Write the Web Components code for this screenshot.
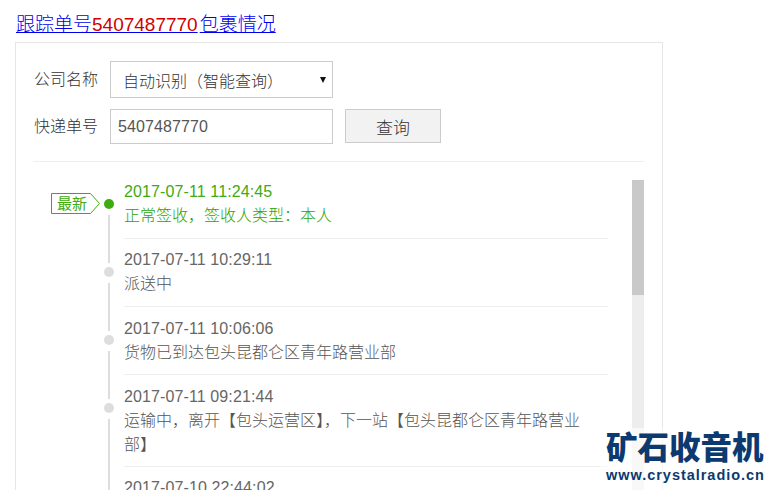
<!DOCTYPE html>
<html lang="zh"><head><meta charset="utf-8"><title>跟踪单号</title>
<style>
html,body{margin:0;height:490px;overflow:hidden;background:#fff}
body{font-family:"Liberation Sans","Noto Sans CJK SC",sans-serif;font-size:16px;color:#666;position:relative}
</style></head><body>
<track-page>
  <span slot="number">5407487770</span>
  <query-form slot="form"></query-form>
  <track-list slot="list">
    <track-row latest time="2017-07-11 11:24:45">正常签收，签收人类型：本人</track-row>
    <track-row time="2017-07-11 10:29:11">派送中</track-row>
    <track-row low time="2017-07-11 10:06:06">货物已到达包头昆都仑区青年路营业部</track-row>
    <track-row low time="2017-07-11 09:21:44">运输中，离开【包头运营区】，下一站【包头昆都仑区青年路营业部】</track-row>
    <track-row time="2017-07-10 22:44:02"></track-row>
  </track-list>
</track-page>
<site-logo></site-logo>
<script>
function def(name, html, init){
  customElements.define(name, class extends HTMLElement{
    constructor(){super();this.attachShadow({mode:'open'}).innerHTML=html;}
    connectedCallback(){ if(init) init(this); }
  });
}
def('track-page',`<style>
:host{display:block;padding:14px 0 0 15px}
a{display:block;font-size:19px;font-weight:300;line-height:20px;height:20px;color:#00e;text-decoration:underline;padding:1px 0 0 1px;margin-bottom:7px;white-space:nowrap}
.n{color:#d00000;margin-right:2px}
.card{box-sizing:border-box;width:648px;height:480px;border:1px solid #e6e6e6;padding:18px 18px 0 17px}
</style>
<a href="#">跟踪单号<span class="n"><slot name="number"></slot></span>包裹情况</a>
<div class="card"><slot name="form"></slot><slot name="list"></slot></div>`);
def('query-form',`<style>
:host{display:block;border-bottom:1px solid #eee;height:100px;color:#333;font-weight:300}
.row{display:flex;align-items:flex-start;gap:13px}
.row+.row{margin-top:11px}
label{width:63px;white-space:nowrap;margin-left:1px;line-height:37px}
.row+.row label{line-height:35px}
.box{box-sizing:border-box;width:223px;border:1px solid #ccc;display:flex;align-items:center}
.sel{height:37px;padding-left:12px;justify-content:space-between;padding-right:6px}
.inp{height:35px;padding-left:7px;color:#555;letter-spacing:.1px}
i{width:0;height:0;border:3.5px solid transparent;border-top:6px solid #111;border-bottom:0}
button{box-sizing:border-box;width:96px;height:34px;margin-left:-1px;border:1px solid #ccc;background:#f2f2f2;font:300 17px "Liberation Sans","Noto Sans CJK SC",sans-serif;color:#333;padding:0}
</style>
<div class="row"><label>公司名称</label><div class="box sel"><span>自动识别（智能查询）</span><i></i></div></div>
<div class="row"><label>快递单号</label><div class="box inp">5407487770</div><button>查询</button></div>`);
def('track-list',`<style>
:host{display:flex;align-items:flex-start;margin-top:9px;height:319px;overflow:hidden}
.rows{width:575px;flex:none}
.bar{width:13px;height:310px;background:#ededed;margin:9px 0 0 24px;flex:none}
.thumb{height:115px;background:#c9c9c9}
</style>
<div class="rows"><slot></slot></div><div class="bar"><div class="thumb"></div></div>`);
def('track-row',`<style>
:host{display:grid;grid-template-columns:91px 1fr;line-height:24px;position:relative;font-weight:300}
.railbox{display:flex;flex-direction:column;align-items:center;width:12px;margin-left:70px}
.top{height:24px;width:2px;background:#ddd}
.dot{width:10px;height:10px;border-radius:50%;background:#ddd;margin:4px 0 6px}
.bot{flex:1;width:2px;background:#ddd}
.body{border-bottom:1px solid #eee;padding:9px 0 10px;min-width:0}
:host([low]) .body{padding:10px 0 9px}
.t{letter-spacing:.11px}
.msg{padding-right:20px;color:#555}
:host([latest]) .top{visibility:hidden}
:host([latest]) .dot{background:#3eab0f}
:host([latest]) .t{color:#3eab0f}
:host([latest]) .msg{color:#2fa300}
.badge{position:absolute;left:18px;top:22px;width:50px;height:21px;display:none;align-items:center;padding-left:6px;box-sizing:border-box;font-size:15px;font-weight:400;line-height:20px;color:#3eab0f}
:host([latest]) .badge{display:flex}
svg{position:absolute;left:0;top:0}
</style>
<div class="railbox"><div class="top"></div><div class="dot"></div><div class="bot"></div></div>
<div class="badge"><svg width="50" height="21" viewBox="0 0 50 21"><path d="M.5.5H39.5L48.5 10.5 39.5 20.5H.5Z" fill="#fff" stroke="#3eab0f"/></svg><span style="position:relative">最新</span></div>
<div class="body"><div class="t"></div><div class="msg"><slot></slot></div></div>`, el=>{
  el.shadowRoot.querySelector('.t').textContent=el.getAttribute('time');
});
def('site-logo',`<style>
:host{position:absolute;left:600px;top:428px;width:172px;height:62px;background:rgba(255,255,255,.6);display:block;color:#0c3a70;padding-left:6px;box-sizing:border-box}
.a{font:900 31.5px/36px "Noto Sans CJK SC",sans-serif;white-space:nowrap;margin-top:-1px}
.b{font:700 14.5px/18px "Liberation Sans",sans-serif;letter-spacing:.97px;white-space:nowrap;margin-top:3px}
</style><div class="a">矿石收音机</div><div class="b">www.crystalradio.cn</div>`);
</script>
</body></html>
